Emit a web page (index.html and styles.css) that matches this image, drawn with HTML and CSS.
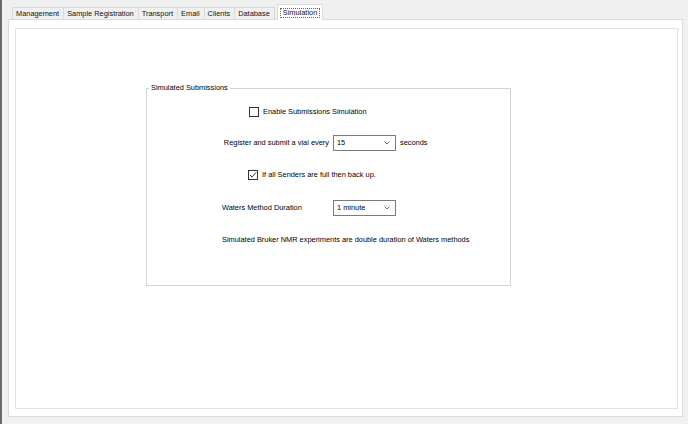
FILE: index.html
```html
<!DOCTYPE html>
<html>
<head>
<meta charset="utf-8">
<link rel="stylesheet" href="styles.css">
</head>
<body>
<div class="window">
  <div class="tabs">
    <div class="tab">Management</div>
    <div class="tab">Sample Registration</div>
    <div class="tab">Transport</div>
    <div class="tab">Email</div>
    <div class="tab">Clients</div>
    <div class="tab">Database</div>
    <div class="tab selected"><span class="focus">Simulation</span></div>
  </div>
  <div class="panel">
    <div class="inner">
      <fieldset class="group">
        <legend>Simulated Submissions</legend>
        <div class="row row-check1">
          <span class="checkbox"></span>
          <span class="label">Enable Submissions Simulation</span>
        </div>
        <div class="row row-indent gap2">
          <span class="label right">Register and submit a vial every</span>
          <span class="combo"><span>15</span><svg width="6" height="4" viewBox="0 0 6 4"><polyline points="0.5,0.5 3,3 5.5,0.5" fill="none" stroke="#707070" stroke-width="1"/></svg></span>
          <span class="label">seconds</span>
        </div>
        <div class="row row-check2 gap3">
          <span class="checkbox"><svg width="8" height="8" viewBox="0 0 8 8"><polyline points="1,4 3,6 7,1.5" fill="none" stroke="#333" stroke-width="1"/></svg></span>
          <span class="label">If all Senders are full then back up.</span>
        </div>
        <div class="row row-indent gap4">
          <span class="label fixed">Waters Method Duration</span>
          <span class="combo"><span>1 minute</span><svg width="6" height="4" viewBox="0 0 6 4"><polyline points="0.5,0.5 3,3 5.5,0.5" fill="none" stroke="#707070" stroke-width="1"/></svg></span>
        </div>
        <div class="row row-indent gap5">
          <span class="label">Simulated Bruker NMR experiments are double duration of Waters methods</span>
        </div>
      </fieldset>
    </div>
  </div>
</div>
</body>
</html>
```

FILE: styles.css
```css
* { box-sizing: border-box; }
html, body { margin: 0; padding: 0; }
body {
  width: 688px;
  height: 424px;
  background: #f0f0f0;
  border-left: 2px solid #6a6a6a;
  font-family: "Liberation Sans", Arial, sans-serif;
  font-size: 7.4px;
  color: #000;
  overflow: hidden;
}
.window {
  padding: 4px 5px 0 6px;
  display: flex;
  flex-direction: column;
}
.tabs {
  display: flex;
  align-items: flex-end;
  margin-left: 4px;
  height: 15px;
}
.tab {
  height: 12px;
  line-height: 11px;
  padding: 0 4px 0 3px;
  border: 1px solid #d9d9d9;
  border-bottom: none;
  margin-left: -1px;
  background: #f0f0f0;
  color: #111;
  white-space: nowrap;
}
.tab:first-child { margin-left: 0; }
.tab.selected {
  height: 16px;
  margin-bottom: -1px;
  background: #fff;
  position: relative;
  z-index: 1;
  padding: 2px 3px 0 3px;
  margin-left: 2px;
}
.focus {
  display: inline-block;
  outline: 1px dotted #666;
  line-height: 8px;
  padding: 0 2px;
}
.panel {
  height: 398px;
  background: #fff;
  border: 1px solid #dadada;
  padding: 8px 4px 7px 6px;
  display: flex;
  flex-direction: column;
}
.inner {
  flex: 1;
  border: 1px solid #e3e3e3;
  background: #fff;
}
.group {
  margin: 54px 0 0 130px;
  width: 365px;
  height: 203px;
  padding: 11px 0 0 0;
  border: 1px solid #d5d5d5;
  display: flex;
  flex-direction: column;
}
.group legend {
  padding: 0 2px;
  margin-left: 2px;
  line-height: 10px;
}
.row {
  display: flex;
  align-items: center;
  height: 16px;
  line-height: 10px;
  white-space: nowrap;
}
.row-check1 { padding-left: 102px; }
.row-check2 { padding-left: 101px; }
.row-indent { padding-left: 75px; }
.gap2 { margin-top: 15px; }
.gap3 { margin-top: 16px; }
.gap4 { margin-top: 17px; }
.gap5 { margin-top: 16px; }
.checkbox {
  width: 10px;
  height: 10px;
  border: 1px solid #333;
  background: #fff;
  margin-right: 4px;
  display: flex;
  align-items: center;
  justify-content: center;
}
.label.right {
  width: 107px;
  text-align: right;
  margin-right: 4px;
}
.label.fixed {
  width: 111px;
}
.combo {
  width: 63px;
  height: 16px;
  border: 1px solid #7a7a7a;
  background: #fff;
  display: flex;
  align-items: center;
  justify-content: space-between;
  padding: 0 5px 0 3px;
  margin-right: 4px;
}
```
